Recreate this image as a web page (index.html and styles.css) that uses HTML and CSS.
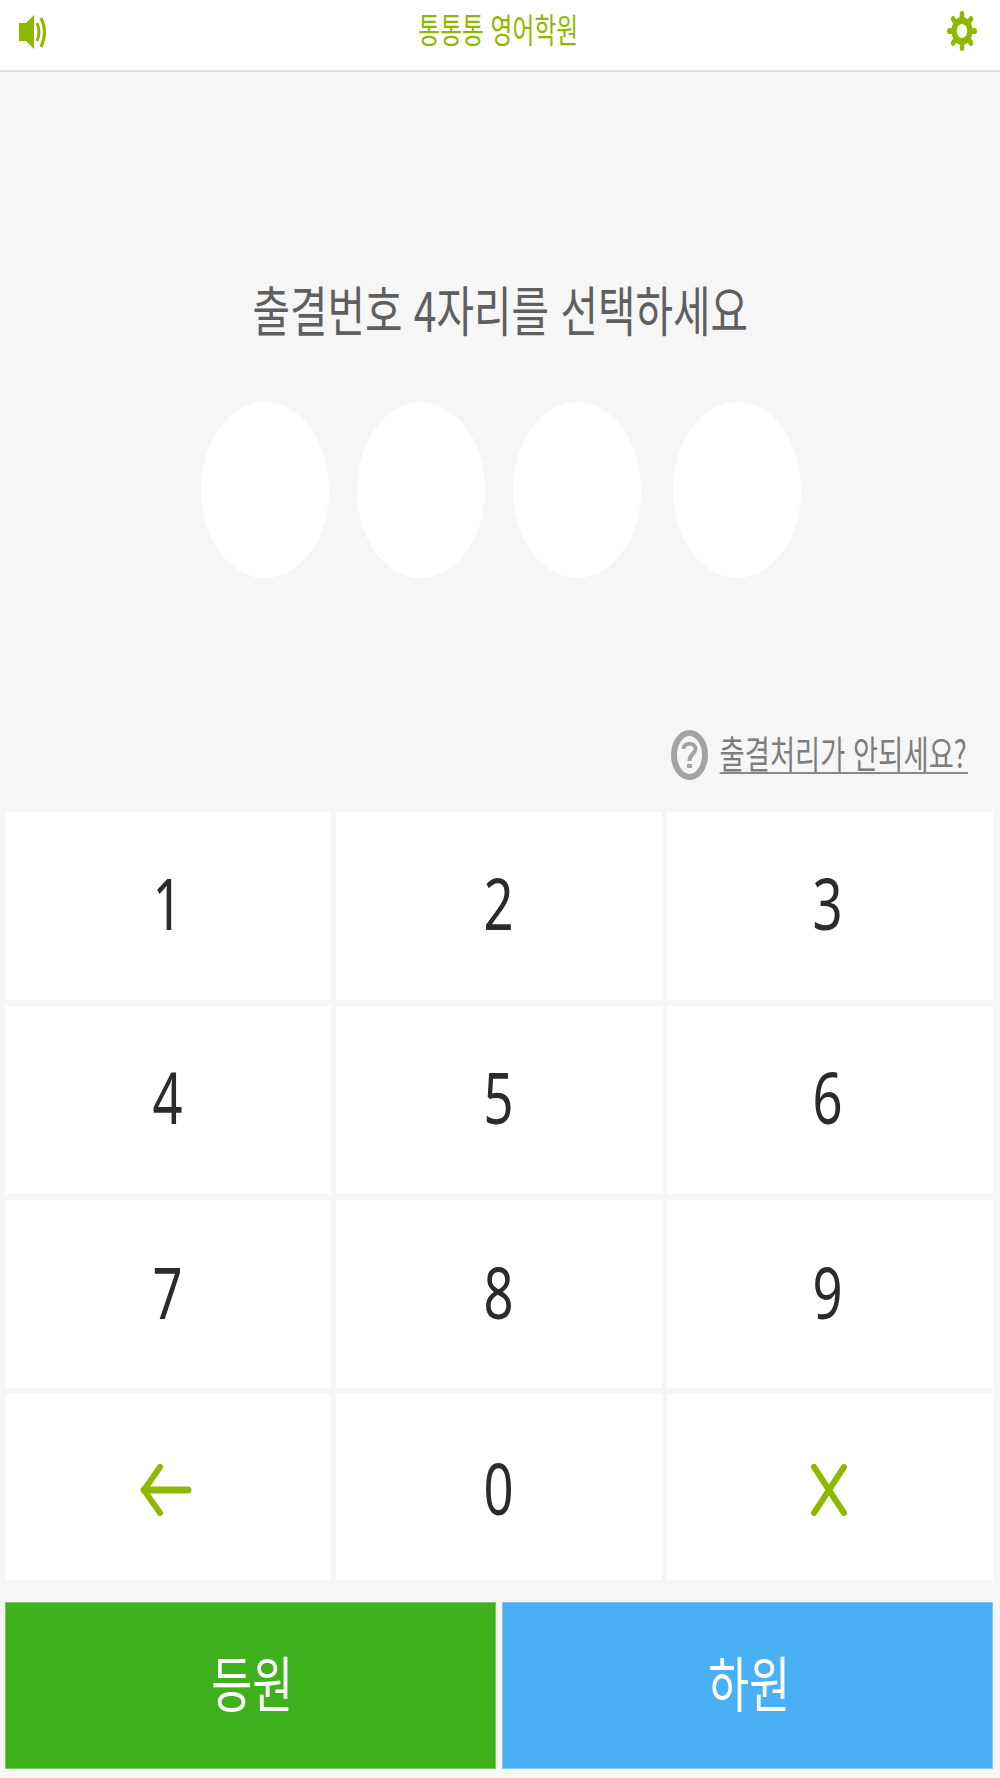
FILE: index.html
```html
<!DOCTYPE html>
<html lang="ko">

<head>
    <meta charset="UTF-8">
    <title>통통통 영어학원</title>
    <link rel="stylesheet" href="styles.css">
</head>

<body>
    <header class="top-bar">
        <svg class="icon-sound" width="30" height="36" viewBox="0 0 30 36">
            <polygon points="0,9 7,9 15,1 15,35 7,27 0,27" fill="#8fb800" />
            <path d="M18 9 Q22 18 18 27" fill="none" stroke="#8fb800" stroke-width="3" />
            <path d="M22 4 Q29 18 22 33" fill="none" stroke="#8fb800" stroke-width="3" />
        </svg>
        <span class="academy-name">통통통 영어학원</span>
        <svg class="icon-gear" width="30" height="40" viewBox="0 0 40 40" preserveAspectRatio="none">
            <circle cx="20" cy="20" r="10.5" fill="none" stroke="#8fb800" stroke-width="7" />
            <g stroke="#8fb800" stroke-width="6" stroke-linecap="round">
                <line x1="20" y1="3" x2="20" y2="8" />
                <line x1="20" y1="32" x2="20" y2="37" />
                <line x1="3" y1="20" x2="8" y2="20" />
                <line x1="32" y1="20" x2="37" y2="20" />
                <line x1="8" y1="8" x2="11" y2="11" />
                <line x1="32" y1="8" x2="29" y2="11" />
                <line x1="8" y1="32" x2="11" y2="29" />
                <line x1="32" y1="32" x2="29" y2="29" />
            </g>
        </svg>
    </header>

    <main>
        <h1 class="prompt"><span>출결번호 4자리를 선택하세요</span></h1>

        <div class="pin-dots">
            <div class="dot"></div>
            <div class="dot"></div>
            <div class="dot"></div>
            <div class="dot last"></div>
        </div>

        <div class="help-row">
            <svg class="icon-help" width="37" height="50" viewBox="0 0 37 50">
                <ellipse cx="18.5" cy="25" rx="15.5" ry="22" fill="none" stroke="#a3a3a3" stroke-width="6" />
                <path d="M12.5 19 C12.5 12 24.5 12 24.5 19 C24.5 24 18.5 24 18.5 31" fill="none" stroke="#a3a3a3" stroke-width="4" />
                <rect x="16" y="34" width="5" height="4" fill="#a3a3a3" />
            </svg>
            <a class="help-link">출결처리가 안되세요?</a>
        </div>

        <div class="keypad">
            <button class="key"><span>1</span></button>
            <button class="key"><span>2</span></button>
            <button class="key"><span>3</span></button>
            <button class="key"><span>4</span></button>
            <button class="key"><span>5</span></button>
            <button class="key"><span>6</span></button>
            <button class="key"><span>7</span></button>
            <button class="key"><span>8</span></button>
            <button class="key"><span>9</span></button>
            <button class="key key-icon">
                <svg class="icon-back" width="52" height="52" viewBox="0 0 52 52">
                    <path d="M20 3 L4 26 L20 49" fill="none" stroke="#8fb800" stroke-width="6" stroke-linecap="round" stroke-linejoin="round" />
                    <path d="M4 26 H48" fill="none" stroke="#8fb800" stroke-width="7" stroke-linecap="round" />
                </svg>
            </button>
            <button class="key"><span>0</span></button>
            <button class="key key-icon">
                <svg class="icon-close" width="36" height="52" viewBox="0 0 36 52">
                    <path d="M3 3 L33 49 M33 3 L3 49" fill="none" stroke="#8fb800" stroke-width="6" stroke-linecap="round" />
                </svg>
            </button>
        </div>

        <div class="actions">
            <button class="action go"><span>등원</span></button>
            <button class="action leave"><span>하원</span></button>
        </div>
    </main>
</body>

</html>
```

FILE: styles.css
```css
body {
    margin: 0;
    background-color: #f6f6f6;
    font-family: "Noto Sans CJK KR", "Noto Sans", sans-serif;
}

.top-bar {
    display: flex;
    justify-content: space-between;
    align-items: center;
    height: 62px;
    padding: 0 23px 8px 19px;
    background-color: #fff;
    border-bottom: 2px solid #dedede;
}

.icon-sound {
    margin-top: 2px;
}

.academy-name {
    display: inline-block;
    margin-bottom: 4px;
    font-size: 34px;
    line-height: 40px;
    color: #8fb800;
    transform: scaleX(0.7);
}

.prompt {
    margin: 0;
    padding-top: 207px;
    font-size: 54px;
    font-weight: 400;
    line-height: 60px;
    text-align: center;
    color: #5f5f5f;
}

.prompt span {
    display: inline-block;
    transform: scaleX(0.755);
    white-space: nowrap;
}

.pin-dots {
    display: flex;
    justify-content: flex-start;
    gap: 28px;
    margin-top: 63px;
    padding-left: 201px;
}

.dot {
    width: 128px;
    height: 176px;
    border-radius: 50%;
    background-color: #fff;
}

.dot.last {
    margin-left: 4px;
}

.help-row {
    display: flex;
    justify-content: flex-end;
    align-items: center;
    gap: 12px;
    height: 50px;
    margin-top: 152px;
    padding-right: 32px;
}

/* box is 345px wide before the squeeze, 248px after */
.help-link {
    display: block;
    width: 345px;
    height: 41px;
    margin-bottom: 6px;
    margin-left: -97px;
    border-bottom: 2px solid #8a8a8a;
    font-size: 38px;
    line-height: 41px;
    color: #7d7d7d;
    white-space: nowrap;
    transform: scaleX(0.72);
    transform-origin: right center;
}

.keypad {
    display: grid;
    grid-template-columns: repeat(3, 326px);
    grid-template-rows: repeat(3, 187.5px) 186px;
    column-gap: 5px;
    row-gap: 6.5px;
    margin-top: 32px;
    padding-left: 5px;
}

.key {
    display: flex;
    justify-content: center;
    align-items: center;
    padding: 0 0 8px;
    border: 0;
    background-color: #fff;
    font-family: "Noto Sans", sans-serif;
    font-size: 72px;
    color: #2b2b2b;
}

.key:nth-child(n+7) {
    padding-bottom: 5px;
}

.key:nth-child(n+10) {
    padding-bottom: 0;
}

.key:nth-child(3n) span {
    margin-right: 4px;
}

.key-icon:nth-child(n+10) {
    padding-top: 6px;
}

.icon-back {
    margin-right: 4px;
}

.icon-close {
    margin-right: 2px;
}

.key span {
    display: inline-block;
    transform: scaleX(0.73);
}

.actions {
    display: flex;
    gap: 6px;
    margin-top: 22px;
    padding-left: 5px;
}

.action {
    width: 491px;
    height: 167px;
    padding: 0 0 11px 4px;
    border: 1px solid rgba(255, 255, 255, 0.3);
    font-family: "Noto Sans CJK KR", "Noto Sans", sans-serif;
    font-size: 60px;
    color: #fff;
}

.action span {
    display: inline-block;
    transform: scaleX(0.74);
}

.go {
    background-color: #3fb11c;
}

.leave {
    background-color: #48b0f3;
}
```
